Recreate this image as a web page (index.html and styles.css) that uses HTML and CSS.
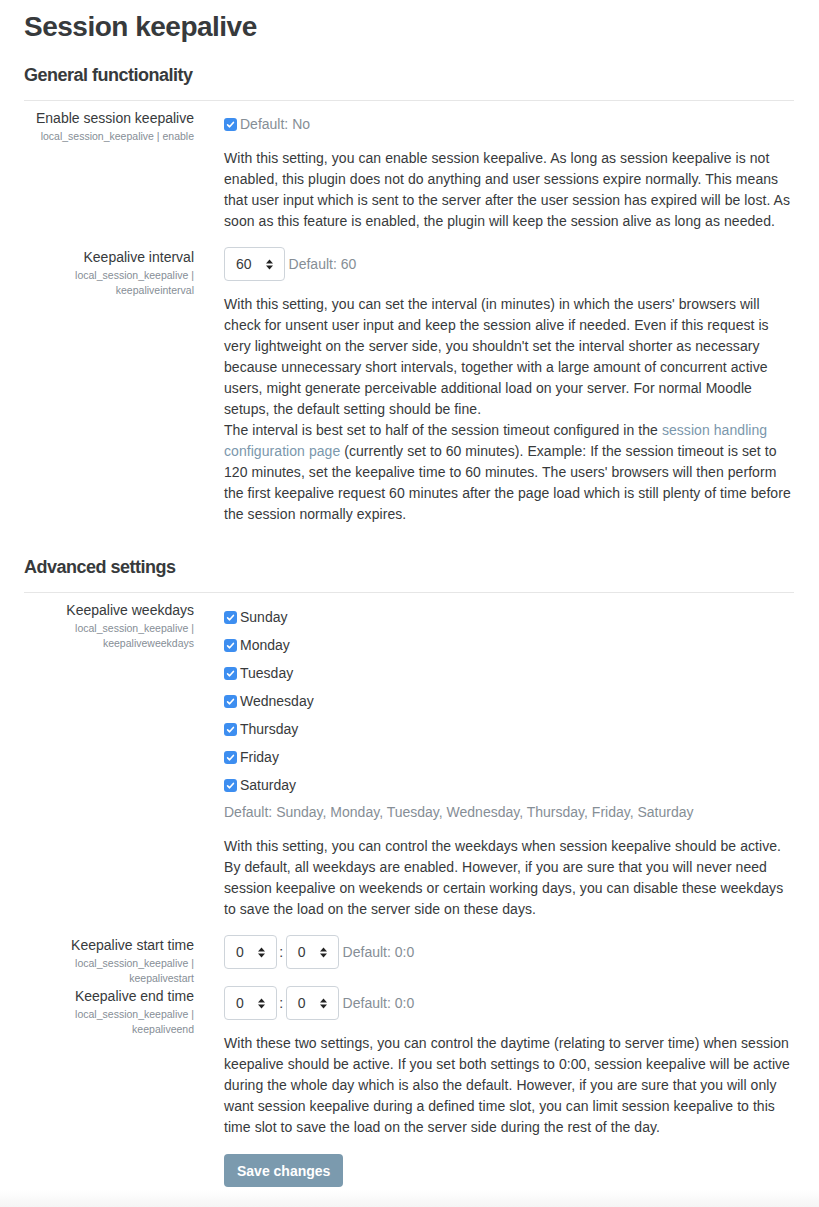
FILE: index.html
```html
<!DOCTYPE html>
<html lang="en">
<head>
    <meta charset="UTF-8">
    <meta name="viewport" content="width=device-width, initial-scale=1.0">
    <title>Session keepalive</title>
    <link rel="stylesheet" href="styles.css">
</head>
<body>
    <div class="page">
        <h2 class="page-title">Session keepalive</h2>

        <form class="settings">
            <section class="group">
                <h3 class="group-title">General functionality</h3>

                <div class="setting">
                    <div class="setting-label">
                        <label>Enable session keepalive</label>
                        <span class="shortname">local_session_keepalive | enable</span>
                    </div>
                    <div class="setting-body">
                        <div class="check-line">
                            <span class="check"><svg width="13" height="13" viewBox="0 0 13 13"><rect width="13" height="13" rx="3" fill="#3d8ef0"/><path d="M3.6 6.9 L5.6 8.8 L9.4 4.4" fill="none" stroke="#fff" stroke-width="1.6" stroke-linecap="round" stroke-linejoin="round"/></svg></span>
                            <span class="default">Default: No</span>
                        </div>
                        <p class="desc desc-tight">With this setting, you can enable session keepalive. As long as session keepalive is not enabled, this plugin does not do anything and user sessions expire normally. This means that user input which is sent to the server after the user session has expired will be lost. As soon as this feature is enabled, the plugin will keep the session alive as long as needed.</p>
                    </div>
                </div>

                <div class="setting">
                    <div class="setting-label">
                        <label>Keepalive interval</label>
                        <span class="shortname">local_session_keepalive | keepaliveinterval</span>
                    </div>
                    <div class="setting-body">
                        <div class="control-line">
                            <div class="select"><span>60</span><svg width="7" height="11" viewBox="0 0 7 11"><path d="M0 4.6 L3.5 0.6 L7 4.6Z M0 6.4 L3.5 10.4 L7 6.4Z" fill="#222"/></svg></div>
                            <span class="default">Default: 60</span>
                        </div>
                        <p class="desc">With this setting, you can set the interval (in minutes) in which the users' browsers will check for unsent user input and keep the session alive if needed. Even if this request is very lightweight on the server side, you shouldn't set the interval shorter as necessary because unnecessary short intervals, together with a large amount of concurrent active users, might generate perceivable additional load on your server. For normal Moodle setups, the default setting should be fine.<br>The interval is best set to half of the session timeout configured in the <a href="#">session handling configuration page</a> (currently set to 60 minutes). Example: If the session timeout is set to 120 minutes, set the keepalive time to 60 minutes. The users' browsers will then perform the first keepalive request 60 minutes after the page load which is still plenty of time before the session normally expires.</p>
                    </div>
                </div>
            </section>

            <section class="group">
                <h3 class="group-title">Advanced settings</h3>

                <div class="setting">
                    <div class="setting-label">
                        <label>Keepalive weekdays</label>
                        <span class="shortname">local_session_keepalive | keepaliveweekdays</span>
                    </div>
                    <div class="setting-body">
                        <div class="check-list">
                            <div class="check-line"><span class="check"><svg width="13" height="13" viewBox="0 0 13 13"><rect width="13" height="13" rx="3" fill="#3d8ef0"/><path d="M3.6 6.9 L5.6 8.8 L9.4 4.4" fill="none" stroke="#fff" stroke-width="1.6" stroke-linecap="round" stroke-linejoin="round"/></svg></span>Sunday</div>
                            <div class="check-line"><span class="check"><svg width="13" height="13" viewBox="0 0 13 13"><rect width="13" height="13" rx="3" fill="#3d8ef0"/><path d="M3.6 6.9 L5.6 8.8 L9.4 4.4" fill="none" stroke="#fff" stroke-width="1.6" stroke-linecap="round" stroke-linejoin="round"/></svg></span>Monday</div>
                            <div class="check-line"><span class="check"><svg width="13" height="13" viewBox="0 0 13 13"><rect width="13" height="13" rx="3" fill="#3d8ef0"/><path d="M3.6 6.9 L5.6 8.8 L9.4 4.4" fill="none" stroke="#fff" stroke-width="1.6" stroke-linecap="round" stroke-linejoin="round"/></svg></span>Tuesday</div>
                            <div class="check-line"><span class="check"><svg width="13" height="13" viewBox="0 0 13 13"><rect width="13" height="13" rx="3" fill="#3d8ef0"/><path d="M3.6 6.9 L5.6 8.8 L9.4 4.4" fill="none" stroke="#fff" stroke-width="1.6" stroke-linecap="round" stroke-linejoin="round"/></svg></span>Wednesday</div>
                            <div class="check-line"><span class="check"><svg width="13" height="13" viewBox="0 0 13 13"><rect width="13" height="13" rx="3" fill="#3d8ef0"/><path d="M3.6 6.9 L5.6 8.8 L9.4 4.4" fill="none" stroke="#fff" stroke-width="1.6" stroke-linecap="round" stroke-linejoin="round"/></svg></span>Thursday</div>
                            <div class="check-line"><span class="check"><svg width="13" height="13" viewBox="0 0 13 13"><rect width="13" height="13" rx="3" fill="#3d8ef0"/><path d="M3.6 6.9 L5.6 8.8 L9.4 4.4" fill="none" stroke="#fff" stroke-width="1.6" stroke-linecap="round" stroke-linejoin="round"/></svg></span>Friday</div>
                            <div class="check-line"><span class="check"><svg width="13" height="13" viewBox="0 0 13 13"><rect width="13" height="13" rx="3" fill="#3d8ef0"/><path d="M3.6 6.9 L5.6 8.8 L9.4 4.4" fill="none" stroke="#fff" stroke-width="1.6" stroke-linecap="round" stroke-linejoin="round"/></svg></span>Saturday</div>
                        </div>
                        <div class="default default-line">Default: Sunday, Monday, Tuesday, Wednesday, Thursday, Friday, Saturday</div>
                        <p class="desc">With this setting, you can control the weekdays when session keepalive should be active. By default, all weekdays are enabled. However, if you are sure that you will never need session keepalive on weekends or certain working days, you can disable these weekdays to save the load on the server side on these days.</p>
                    </div>
                </div>

                <div class="setting setting-joined">
                    <div class="setting-label">
                        <label>Keepalive start time</label>
                        <span class="shortname">local_session_keepalive | keepalivestart</span>
                    </div>
                    <div class="setting-body">
                        <div class="control-line">
                            <div class="select"><span>0</span><svg width="7" height="11" viewBox="0 0 7 11"><path d="M0 4.6 L3.5 0.6 L7 4.6Z M0 6.4 L3.5 10.4 L7 6.4Z" fill="#222"/></svg></div>
                            <span class="colon">:</span>
                            <div class="select"><span>0</span><svg width="7" height="11" viewBox="0 0 7 11"><path d="M0 4.6 L3.5 0.6 L7 4.6Z M0 6.4 L3.5 10.4 L7 6.4Z" fill="#222"/></svg></div>
                            <span class="default">Default: 0:0</span>
                        </div>
                    </div>
                </div>

                <div class="setting">
                    <div class="setting-label">
                        <label>Keepalive end time</label>
                        <span class="shortname">local_session_keepalive | keepaliveend</span>
                    </div>
                    <div class="setting-body">
                        <div class="control-line">
                            <div class="select"><span>0</span><svg width="7" height="11" viewBox="0 0 7 11"><path d="M0 4.6 L3.5 0.6 L7 4.6Z M0 6.4 L3.5 10.4 L7 6.4Z" fill="#222"/></svg></div>
                            <span class="colon">:</span>
                            <div class="select"><span>0</span><svg width="7" height="11" viewBox="0 0 7 11"><path d="M0 4.6 L3.5 0.6 L7 4.6Z M0 6.4 L3.5 10.4 L7 6.4Z" fill="#222"/></svg></div>
                            <span class="default">Default: 0:0</span>
                        </div>
                        <p class="desc">With these two settings, you can control the daytime (relating to server time) when session keepalive should be active. If you set both settings to 0:00, session keepalive will be active during the whole day which is also the default. However, if you are sure that you will only want session keepalive during a defined time slot, you can limit session keepalive to this time slot to save the load on the server side during the rest of the day.</p>
                    </div>
                </div>
            </section>

            <div class="actions">
                <button type="button" class="btn-save">Save changes</button>
            </div>
        </form>
    </div>
    <div class="page-footer"></div>
</body>
</html>
```

FILE: styles.css
```css
body {
    margin: 0;
    font-family: "Liberation Sans", Arial, sans-serif;
    font-size: 14px;
    line-height: 21px;
    color: #373a3c;
    background: #fff;
}
.page {
    padding: 9px 25px 0 24px;
}
.page-title {
    margin: 0 0 19px;
    font-size: 28px;
    line-height: 35px;
    font-weight: bold;
    letter-spacing: -0.5px;
}
.group + .group {
    margin-top: 30px;
}
.group-title {
    margin: 0 0 7px;
    padding-bottom: 13px;
    border-bottom: 1px solid #e6e6e6;
    font-size: 18px;
    line-height: 24px;
    font-weight: bold;
    letter-spacing: -0.5px;
}
.setting {
    display: grid;
    grid-template-columns: 170px 1fr;
    column-gap: 30px;
    margin-bottom: 15px;
}
.setting-joined {
    margin-bottom: 0;
}
.setting-label {
    text-align: right;
}
.setting-label label {
    display: block;
    line-height: 21px;
}
.shortname {
    display: block;
    font-size: 10.5px;
    line-height: 15px;
    color: #868e96;
}
.check-line {
    display: flex;
    align-items: center;
    height: 28px;
}
.setting-body > .check-line {
    padding-top: 2px;
}
.check-list {
    padding-top: 3px;
}
.check {
    display: inline-flex;
    margin-right: 3px;
}
.default {
    color: #868e96;
}
.default-line {
    margin-top: 3px;
}
.control-line {
    display: flex;
    align-items: center;
    height: 34px;
}
.select {
    display: inline-flex;
    align-items: center;
    gap: 14px;
    height: 34px;
    box-sizing: border-box;
    padding: 0 11px;
    border: 1px solid #ced4da;
    border-radius: 4px;
    background: #fff;
}
.colon {
    width: 9px;
    text-align: center;
}
.select + .default {
    margin-left: 4px;
}
.desc {
    margin: 13px 0 0;
    letter-spacing: 0.06px;
}
.desc-tight {
    margin-top: 10px;
}
.desc a {
    color: #7b97ac;
    text-decoration: none;
}
.actions {
    padding: 1px 0 0 224px;
    margin-left: -24px;
}
.btn-save {
    height: 33px;
    padding: 0 13px;
    font-family: inherit;
    font-size: 14px;
    font-weight: bold;
    color: #fff;
    background-color: #7b9aae;
    border: none;
    border-radius: 4px;
}
.page-footer {
    margin-top: 3px;
    height: 20px;
    background: linear-gradient(#fff, #f3f3f3);
}
```
